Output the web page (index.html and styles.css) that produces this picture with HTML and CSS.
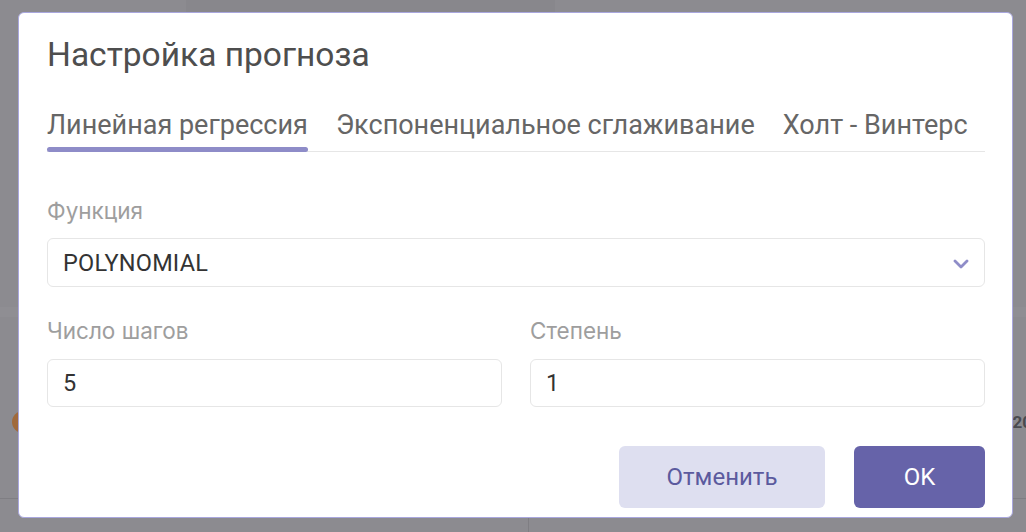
FILE: index.html
```html
<!DOCTYPE html>
<html lang="ru">
<head>
<meta charset="utf-8">
<title>Настройка прогноза</title>
<link rel="stylesheet" href="styles.css">
</head>
<body>
<div class="backdrop">
  <div class="bg-top"><div class="bg-top-block"></div></div>
  <div class="bg-band"></div>
  <div class="bg-row"><span class="bg-dot"></span><span class="bg-year">20</span></div>
  <div class="bg-line"></div>
  <div class="bg-bottom"><div class="bg-col"></div></div>
</div>

<div class="dialog" role="dialog">
  <h1 class="title">Настройка прогноза</h1>
  <div class="tabs">
    <div class="tab active">Линейная регрессия</div>
    <div class="tab">Экспоненциальное сглаживание</div>
    <div class="tab">Холт - Винтерс</div>
  </div>

  <div class="field field-func">
    <div class="label">Функция</div>
    <div class="select">
      <span class="value">POLYNOMIAL</span>
      <svg class="chev" width="16" height="10" viewBox="0 0 16 10"><polyline points="2,2 8,8 14,2" fill="none" stroke="#8f8dc8" stroke-width="2.8" stroke-linecap="round" stroke-linejoin="round"/></svg>
    </div>
  </div>

  <div class="row">
    <div class="field">
      <div class="label">Число шагов</div>
      <div class="input"><span class="value">5</span></div>
    </div>
    <div class="field">
      <div class="label">Степень</div>
      <div class="input"><span class="value">1</span></div>
    </div>
  </div>

  <div class="actions">
    <button class="btn btn-cancel">Отменить</button>
    <button class="btn btn-ok">OK</button>
  </div>
</div>
</body>
</html>
```

FILE: styles.css
```css
* { box-sizing: border-box; }
html, body { margin: 0; padding: 0; }
body {
  width: 1026px;
  height: 532px;
  overflow: hidden;
  background: #8c8b90;
  font-family: Roboto, "Liberation Sans", sans-serif;
}

/* dimmed page behind the modal */
.backdrop {
  display: flex;
  flex-direction: column;
  height: 532px;
}
.bg-top { height: 12px; }
.bg-top-block {
  margin-left: 186px;
  width: 369px;
  height: 12px;
  background: #88878c;
}
.bg-band {
  margin-top: 295px;
  height: 10px;
  background: #8f8e93;
}
.bg-row {
  margin-top: 94px;
  height: 22px;
  display: flex;
  justify-content: space-between;
  align-items: center;
}
.bg-dot {
  width: 22px;
  height: 22px;
  border-radius: 50%;
  background: #a06a3c;
  margin-left: 12px;
}
.bg-year {
  font-family: Roboto, sans-serif;
  font-weight: 700;
  font-size: 17px;
  color: #4a4a50;
  margin-right: -6px;
}
.bg-line {
  margin-top: 65px;
  height: 1px;
  background: #7f7e83;
}
.bg-bottom { flex: 1; }
.bg-col {
  margin-left: 528px;
  width: 1px;
  height: 100%;
  background: #7f7e83;
}

/* modal */
.dialog {
  position: fixed;
  left: 18px;
  top: 12px;
  width: 995px;
  height: 506px;
  background: #fff;
  border: 1px solid #a9a7de;
  border-radius: 6px;
  padding: 22px 27px 9px 28px;
  display: flex;
  flex-direction: column;
}
.title {
  margin: 0;
  font-family: Roboto, sans-serif;
  font-weight: 400;
  font-size: 33.5px;
  line-height: 39px;
  color: #4e4e4e;
}
.tabs {
  margin-top: 34px;
  display: flex;
  gap: 28px;
  border-bottom: 1px solid #e6e6e6;
}
.tab {
  position: relative;
  font-size: 27px;
  line-height: 34px;
  padding-bottom: 9px;
  color: #666;
  white-space: nowrap;
}
.tab.active::after {
  content: "";
  position: absolute;
  left: 0;
  right: 0;
  bottom: -1px;
  height: 5px;
  border-radius: 3px;
  background: #8e8cc8;
}

.field { display: flex; flex-direction: column; }
.field-func { margin-top: 46px; }
.label {
  font-family: Inter, "Noto Sans", sans-serif;
  font-size: 22.5px;
  line-height: 26px;
  color: #9e9e9e;
}
.select, .input {
  border: 1px solid #e6e6e6;
  border-radius: 6px;
  display: flex;
  align-items: center;
  padding: 0 15px;
}
.select {
  margin-top: 14px;
  height: 49px;
  justify-content: space-between;
}
.input {
  margin-top: 15px;
  height: 48px;
}
.value {
  font-family: Roboto, sans-serif;
  font-size: 23.5px;
  letter-spacing: 0.2px;
  color: #333;
}
.chev { display: block; margin-top: 2px; }

.row {
  margin-top: 31px;
  display: grid;
  grid-template-columns: 1fr 1fr;
  gap: 28px;
}

.actions {
  margin-top: 39px;
  display: flex;
  justify-content: flex-end;
  gap: 29px;
}
.btn {
  height: 62px;
  border: none;
  border-radius: 6px;
  font-family: Roboto, sans-serif;
  font-size: 24px;
  padding: 0;
}
.btn-cancel {
  width: 206px;
  background: #dedff0;
  color: #5b5a9e;
}
.btn-ok {
  width: 131px;
  background: #6663a9;
  color: #fff;
}
```
